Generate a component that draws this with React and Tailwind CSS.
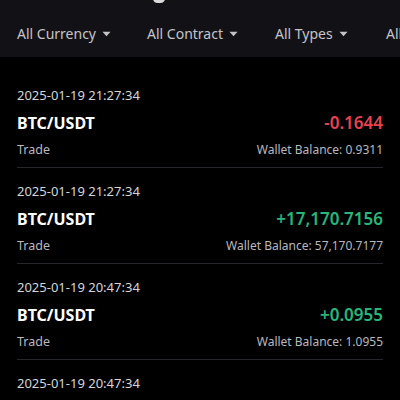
import React from 'react';

const filters = ['All Currency', 'All Contract', 'All Types', 'All Time'];

const records = [
    { time: '2025-01-19 21:27:34', pair: 'BTC/USDT', amount: '-0.1644', type: 'Trade', balance: '0.9311' },
    { time: '2025-01-19 21:27:34', pair: 'BTC/USDT', amount: '+17,170.7156', type: 'Trade', balance: '57,170.7177' },
    { time: '2025-01-19 20:47:34', pair: 'BTC/USDT', amount: '+0.0955', type: 'Trade', balance: '1.0955' },
    { time: '2025-01-19 20:47:34', pair: 'BTC/USDT', amount: '-0.0412', type: 'Trade', balance: '1.0000' },
];

const Caret = () => (
    <svg className="w-[9px] h-[6px] ml-[6px] mt-[1px]" viewBox="0 0 10 6" fill="currentColor">
        <path d="M0.5 0.5h9L5 5.6z" />
    </svg>
);

const App = () => {
    return (
        <div className="w-[400px] h-[400px] overflow-hidden bg-black text-white" style={{ fontFamily: '"Noto Sans", "Liberation Sans", sans-serif' }}>
            {/* Filter bar */}
            <div className="relative h-[57px] bg-[#121216] flex items-center pl-[17px] pt-[10px] whitespace-nowrap">
                <div className="absolute top-[-6px] left-[153px] w-[12px] h-[9px] rounded-full bg-[#d9d9d9]" />
                {filters.map((f, i) => (
                    <div
                        key={f}
                        className={`flex items-center shrink-0 text-[14px] text-[#c4c4c8] ${i === 0 ? 'w-[130px]' : i === 1 ? 'w-[128px]' : i === 2 ? 'w-[111px]' : ''}`}
                    >
                        {f}
                        <Caret />
                    </div>
                ))}
            </div>

            {/* Records */}
            <div className="px-[17px] pt-[17px]">
                {records.map((r, i) => (
                    <div key={i} className={`border-b border-[#25252a] pb-[8px] ${i === 0 ? 'pt-[12px]' : 'pt-[14px]'}`}>
                        <div className="text-[13px] leading-[18px] text-[#d6d6d8]">{r.time}</div>
                        <div className="flex items-center justify-between mt-[9px] leading-[20px]">
                            <span className="text-[16px] font-bold">{r.pair}</span>
                            <span className={`text-[17px] font-semibold ${r.amount.startsWith('-') ? 'text-[#e8414f]' : 'text-[#27b57a]'}`}>{r.amount}</span>
                        </div>
                        <div className="flex items-center justify-between mt-[8px] text-[12px] leading-[18px] text-[#b9b9bd]">
                            <span className="text-[12.5px]">{r.type}</span>
                            <span>Wallet Balance: {r.balance}</span>
                        </div>
                    </div>
                ))}
            </div>
        </div>
    );
};

export default App;
